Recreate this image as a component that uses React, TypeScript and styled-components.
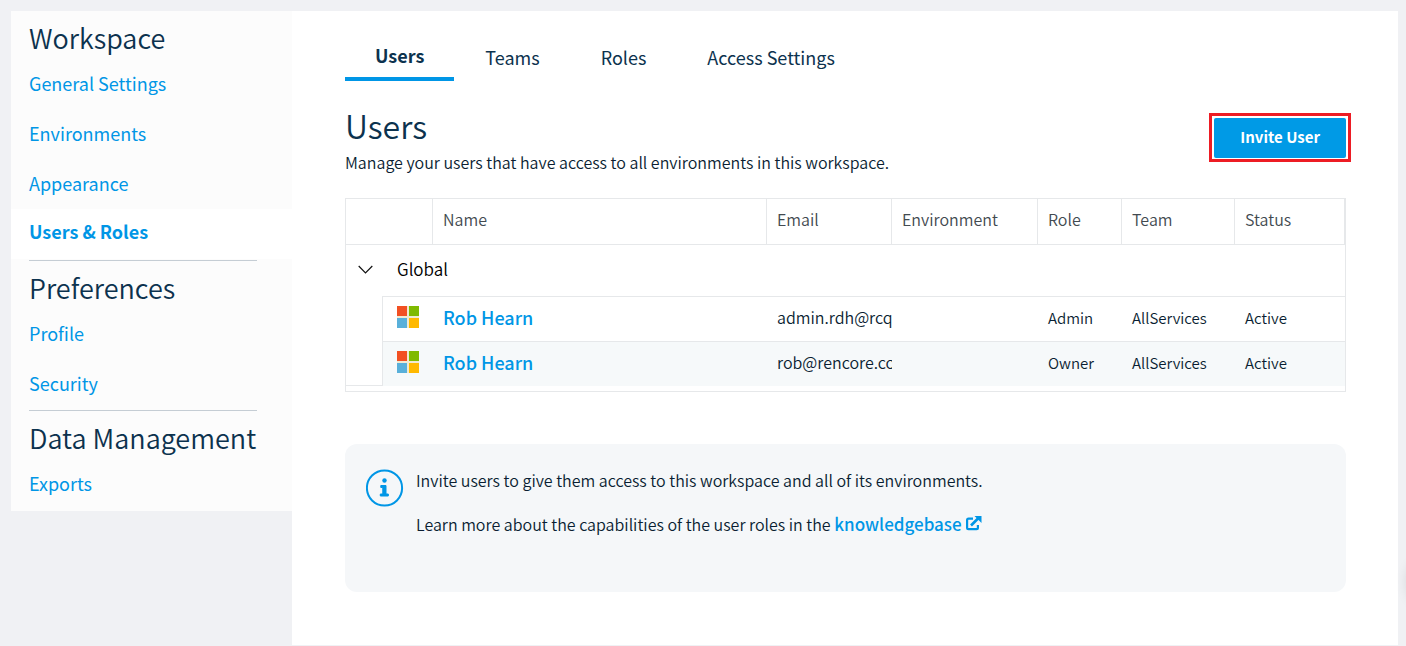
import React from 'react';
import styled, { createGlobalStyle } from 'styled-components';

const GlobalStyle = createGlobalStyle`
  *, *::before, *::after { box-sizing: border-box; }
  body {
    margin: 0;
    background: #f0f1f4;
    color: #0a1e32;
    font-family: "Noto Sans CJK SC", "Noto Sans", sans-serif;
    font-size: 16px;
    font-weight: 350;
    line-height: 24px;
    overflow-x: hidden;
  }
  h1, h2, p { margin: 0; }
`;

const accent = '#0096e6';
const navy = '#0c324e';
const line = '#e6e8ea';

const Page = styled.div`
  display: flex;
  align-items: flex-start;
  min-height: 100vh;
  padding: 11px 8px 1px 11px;
`;

const Sidebar = styled.nav`
  flex: 0 0 281px;
  min-width: 0;
  padding-bottom: 1px;
  background: #fcfcfc;
`;

const NavSection = styled.section`
  display: flex;
  flex-direction: column;
  padding-bottom: 1px;
`;

const NavTitle = styled.h2`
  margin: 0 35px 0 18px;
  padding-top: 6px;
  color: ${navy};
  font-size: 27px;
  font-weight: 350;
  line-height: 42px;
  white-space: nowrap;

  ${NavSection} + ${NavSection} & { border-top: 1px solid #c5cdd4; }
`;

const NavLink = styled.a<{ $active?: boolean }>`
  padding: 0 18px ${(p) => (p.$active ? '6px' : '2px')};
  color: ${accent};
  font-size: 18px;
  font-weight: ${(p) => (p.$active ? 700 : 400)};
  line-height: ${(p) => (p.$active ? '44px' : '48px')};
  text-decoration: none;
  background: ${(p) => (p.$active ? '#fff' : 'transparent')};
`;

const Main = styled.main`
  flex: 1;
  min-width: 0;
  min-height: calc(100vh - 12px);
  padding: 22px 52px 53px 53px;
  background: #fff;
`;

const Tabs = styled.nav`
  display: flex;
  gap: 1px;
`;

const Tab = styled.a<{ $active?: boolean }>`
  padding: 0 30px;
  color: ${navy};
  font-size: 18px;
  font-weight: ${(p) => (p.$active ? 700 : 400)};
  line-height: ${(p) => (p.$active ? '44px' : '48px')};
  text-decoration: none;
  border-bottom: ${(p) => (p.$active ? `4px solid ${accent}` : '0')};
`;

const PageHead = styled.header`
  display: flex;
  justify-content: space-between;
  align-items: flex-start;
  margin-top: 22px;
`;

const Title = styled.h1`
  margin-bottom: 3px;
  color: ${navy};
  font-size: 32px;
  font-weight: 350;
  line-height: 44px;
`;

const Highlight = styled.div`
  margin: 10px -5px 0 0;
  padding: 2px 2px 1px;
  border: 3px solid #ed1c24;
`;

const Button = styled.button`
  display: block;
  height: 40px;
  padding: 0 26px 3px;
  border: 0;
  border-radius: 2px;
  background: #009ae6;
  color: #fff;
  font: inherit;
  font-size: 15px;
  font-weight: 700;
  cursor: pointer;
`;

const TableFrame = styled.div`
  margin-top: 24px;
  padding-bottom: 5px;
  border: 1px solid ${line};
`;

const Table = styled.table`
  width: 100%;
  table-layout: fixed;
  border-collapse: separate;
  border-spacing: 0;
`;

const Col = styled.col<{ $w?: number }>`
  width: ${(p) => (p.$w ? `${p.$w}px` : 'auto')};
`;

const HeadCell = styled.th`
  height: 46px;
  padding: 0 10px 5px;
  color: #424a50;
  font-weight: 350;
  text-align: left;
  border-right: 1px solid ${line};
  border-bottom: 1px solid ${line};
`;

const ToggleCell = styled.td`
  height: 51px;
  padding: 0 0 2px;
`;

const Toggle = styled.button`
  display: flex;
  align-items: center;
  justify-content: center;
  width: 39px;
  height: 36px;
  padding: 0;
  border: 0;
  background: none;
  cursor: pointer;
`;

const GroupCell = styled.td`
  padding: 0 14px 4px;
  color: #000;
  font-size: 17px;
`;

const IndentCell = styled.td`
  padding: 0;
  border-right: 1px solid ${line};
  border-bottom: 1px solid ${line};
`;

const Cell = styled.td`
  height: 45px;
  padding: 0 0 2px 10px;
  font-size: 15px;
  white-space: nowrap;
  overflow: hidden;
  border-top: 1px solid ${line};
`;

const LogoCell = styled(Cell)`
  padding: 0 0 4px 14px;
  svg { display: block; }
`;

const EmailCell = styled(Cell)`
  padding-bottom: 4px;
  font-size: 16px;
`;

const Row = styled.tr<{ $shaded?: boolean }>`
  ${Cell} { background: ${(p) => (p.$shaded ? '#f6f9fa' : '#fff')}; }
`;

const StrongLink = styled.a`
  color: ${accent};
  font-size: 18px;
  font-weight: 500;
  text-decoration: none;
`;

const InlineLink = styled(StrongLink)`
  font-size: 17px;
`;

const InfoBox = styled.aside`
  display: flex;
  gap: 12px;
  min-height: 148px;
  margin-top: 52px;
  padding: 24px 21px;
  border-radius: 12px;
  background: #f5f7f9;
`;

const InfoText = styled.div`
  display: flex;
  flex-direction: column;
  gap: 20px;
`;

const ChatBubble = styled.div`
  position: fixed;
  right: -56px;
  bottom: 36px;
  width: 56px;
  height: 56px;
  border-radius: 50%;
  box-shadow: 0 0 12px rgba(0, 0, 0, 0.1);
`;

const sections = [
  { title: 'Workspace', links: ['General Settings', 'Environments', 'Appearance', 'Users & Roles'] },
  { title: 'Preferences', links: ['Profile', 'Security'] },
  { title: 'Data Management', links: ['Exports'] },
];

const tabs = ['Users', 'Teams', 'Roles', 'Access Settings'];

const columns = ['Name', 'Email', 'Environment', 'Role', 'Team', 'Status'];

const users = [
  { name: 'Rob Hearn', email: 'admin.rdh@rcq', role: 'Admin', team: 'AllServices', status: 'Active' },
  { name: 'Rob Hearn', email: 'rob@rencore.co', role: 'Owner', team: 'AllServices', status: 'Active' },
];

const MicrosoftLogo = () => (
  <svg width="22" height="22" viewBox="0 0 22 22" role="img" aria-label="Microsoft">
    <path fill="#f0ead2" d="M0 0h22v22H0z" />
    <path fill="#f25022" d="M0 0h10v10H0z" />
    <path fill="#7fba00" d="M12 0h10v10H12z" />
    <path fill="#59b0da" d="M0 12h10v10H0z" />
    <path fill="#ffb900" d="M12 12h10v10H12z" />
  </svg>
);

const Chevron = () => (
  <svg width="15" height="9" viewBox="0 0 15 9" fill="none" stroke="#111" strokeWidth="1.2">
    <path d="M.7 1l6.8 6.8L14.300 1" />
  </svg>
);

const InfoMark = styled.svg`
  flex: none;
  margin-top: 1px;
`;

const InfoIcon = () => (
  <InfoMark width="38" height="38" viewBox="0 0 38 38" aria-hidden="true">
    <circle cx="18.500" cy="19" r="17.600" fill="none" stroke={accent} strokeWidth="2" />
    <circle cx="18.500" cy="11.500" r="2.200" fill={accent} />
    <path fill={accent} stroke={accent} strokeLinejoin="round" d="M14.800 16.500h5.200v8.500h2.300v2h-8v-2h2.500v-6.500h-2z" />
  </InfoMark>
);

const ExternalIcon = () => (
  <svg width="17" height="16" viewBox="0 0 17 16" aria-hidden="true">
    <path fill="none" stroke={accent} strokeWidth="2.200" d="M8 3.600H3.500Q2.100 3.600 2.100 5V12.800Q2.100 14.200 3.500 14.200H11.500Q12.900 14.200 12.900 12.800V10" />
    <path fill="none" stroke={accent} strokeWidth="2.600" d="M6 10.500l7.500-7.500" />
    <path fill={accent} d="M9.500 1h7v7z" />
  </svg>
);

export default function App() {
  return (
    <>
      <GlobalStyle />
      <Page>
        <Sidebar aria-label="Settings">
          {sections.map((section) => (
            <NavSection key={section.title}>
              <NavTitle>{section.title}</NavTitle>
              {section.links.map((label) => (
                <NavLink key={label} href="#" $active={label === 'Users & Roles'}>
                  {label}
                </NavLink>
              ))}
            </NavSection>
          ))}
        </Sidebar>
        <Main>
          <Tabs aria-label="Users and roles">
            {tabs.map((label) => (
              <Tab key={label} href="#" $active={label === 'Users'}>
                {label}
              </Tab>
            ))}
          </Tabs>
          <PageHead>
            <div>
              <Title>Users</Title>
              <p>Manage your users that have access to all environments in this workspace.</p>
            </div>
            <Highlight>
              <Button type="button">Invite User</Button>
            </Highlight>
          </PageHead>
          <TableFrame>
            <Table>
              <colgroup>
                <Col $w={37} />
                <Col $w={50} />
                <Col />
                <Col $w={125} />
                <Col $w={146} />
                <Col $w={84} />
                <Col $w={113} />
                <Col $w={110} />
              </colgroup>
              <thead>
                <tr>
                  <HeadCell as="td" colSpan={2} />
                  {columns.map((label) => (
                    <HeadCell key={label} scope="col">{label}</HeadCell>
                  ))}
                </tr>
              </thead>
              <tbody>
                <tr>
                  <ToggleCell>
                    <Toggle type="button" aria-label="Collapse Global" aria-expanded>
                      <Chevron />
                    </Toggle>
                  </ToggleCell>
                  <GroupCell colSpan={7}>Global</GroupCell>
                </tr>
                {users.map((user, i) => (
                  <Row key={user.email} $shaded={i % 2 === 1}>
                    {i === 0 && <IndentCell rowSpan={users.length} />}
                    <LogoCell><MicrosoftLogo /></LogoCell>
                    <Cell><StrongLink href="#">{user.name}</StrongLink></Cell>
                    <EmailCell>{user.email}</EmailCell>
                    <Cell />
                    <Cell>{user.role}</Cell>
                    <Cell>{user.team}</Cell>
                    <Cell>{user.status}</Cell>
                  </Row>
                ))}
              </tbody>
            </Table>
          </TableFrame>
          <InfoBox>
            <InfoIcon />
            <InfoText>
              <p>Invite users to give them access to this workspace and all of its environments.</p>
              <p>
                Learn more about the capabilities of the user roles in the{' '}
                <InlineLink href="#">knowledgebase <ExternalIcon /></InlineLink>
              </p>
            </InfoText>
          </InfoBox>
        </Main>
      </Page>
      <ChatBubble />
    </>
  );
}
